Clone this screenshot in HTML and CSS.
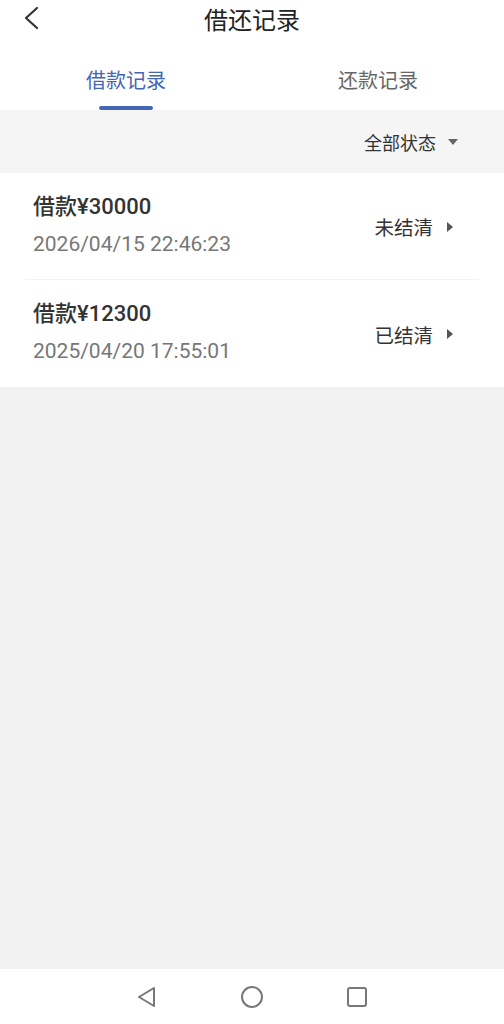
FILE: index.html
```html
<!DOCTYPE html>
<html lang="zh-CN">
<head>
    <meta charset="UTF-8">
    <meta name="viewport" content="width=device-width, initial-scale=1.0">
    <title>借还记录</title>
    <link rel="stylesheet" href="styles.css">
</head>
<body>
    <div class="page">
        <header class="topbar">
            <span class="back">
                <svg width="18" height="24" viewBox="0 0 18 24"><path d="M15 2 L4 12 L15 22" fill="none" stroke="#333" stroke-width="2.2" stroke-linecap="round" stroke-linejoin="round"/></svg>
            </span>
            <h1 class="title">借还记录</h1>
        </header>

        <nav class="tabs">
            <div class="tab active">借款记录</div>
            <div class="tab">还款记录</div>
        </nav>

        <div class="filter">
            <span>全部状态</span>
            <span class="caret-down"></span>
        </div>

        <div class="list">
            <div class="item">
                <div class="info">
                    <div class="amount">借款¥30000</div>
                    <div class="date">2026/04/15 22:46:23</div>
                </div>
                <div class="status">未结清<span class="caret-right"></span></div>
            </div>
            <div class="item">
                <div class="info">
                    <div class="amount">借款¥12300</div>
                    <div class="date">2025/04/20 17:55:01</div>
                </div>
                <div class="status">已结清<span class="caret-right"></span></div>
            </div>
        </div>

        <div class="spacer"></div>

        <footer class="navbar">
            <svg width="22" height="22" viewBox="0 0 22 22"><path d="M18 2 L3 11 L18 20 Z" fill="none" stroke="#777" stroke-width="2" stroke-linejoin="round"/></svg>
            <svg width="24" height="24" viewBox="0 0 24 24"><circle cx="12" cy="12" r="10" fill="none" stroke="#777" stroke-width="2"/></svg>
            <svg width="22" height="22" viewBox="0 0 22 22"><rect x="2" y="2" width="18" height="18" rx="2" fill="none" stroke="#777" stroke-width="2"/></svg>
        </footer>
    </div>
</body>
</html>
```

FILE: styles.css
```css
* {
    box-sizing: border-box;
}

body {
    margin: 0;
    font-family: Roboto, "Noto Sans CJK SC", sans-serif;
    color: #333;
    background-color: #f2f2f2;
}

.page {
    display: flex;
    flex-direction: column;
    height: 1024px;
}

.topbar {
    height: 36px;
    display: flex;
    align-items: center;
    justify-content: center;
    position: relative;
    background-color: #fff;
}

.back {
    position: absolute;
    left: 22px;
    top: 6px;
}

.title {
    margin: 0;
    font-size: 24px;
    font-weight: 400;
    color: #222;
}

.tabs {
    display: flex;
    height: 74px;
    background-color: #fff;
}

.tab {
    flex: 1;
    display: flex;
    align-items: center;
    justify-content: center;
    font-size: 20px;
    color: #666;
    position: relative;
    padding-top: 12px;
}

.tab.active {
    color: #4565b5;
}

.tab.active::after {
    content: "";
    position: absolute;
    bottom: 0;
    left: 50%;
    margin-left: -27px;
    width: 54px;
    height: 4px;
    border-radius: 2px;
    background-color: #4565b5;
}

.filter {
    height: 63px;
    display: flex;
    align-items: center;
    justify-content: flex-end;
    padding-right: 46px;
    background-color: #f5f5f5;
    font-size: 18px;
    color: #333;
}

.caret-down {
    margin-left: 12px;
    width: 0;
    height: 0;
    border-left: 5px solid transparent;
    border-right: 5px solid transparent;
    border-top: 6px solid #666;
}

.list {
    background-color: #fff;
    padding: 0 25px;
}

.item {
    height: 107px;
    display: flex;
    align-items: center;
    justify-content: space-between;
    padding: 0 8px 3px;
    border-bottom: 1px solid #f3f3f3;
}

.item:last-child {
    border-bottom: none;
}

.amount {
    font-size: 22px;
    font-weight: 500;
    color: #333;
    line-height: 30px;
}

.date {
    margin-top: 8px;
    font-size: 21px;
    color: #777;
    line-height: 28px;
}

.status {
    display: flex;
    align-items: center;
    font-size: 19.5px;
    color: #333;
    padding-right: 18px;
    margin-top: 4px;
}

.caret-right {
    margin-left: 14px;
    width: 0;
    height: 0;
    border-top: 5px solid transparent;
    border-bottom: 5px solid transparent;
    border-left: 6px solid #555;
}

.spacer {
    flex: 1;
}

.navbar {
    height: 55px;
    display: flex;
    align-items: center;
    justify-content: center;
    gap: 82px;
    background-color: #fff;
}
```
